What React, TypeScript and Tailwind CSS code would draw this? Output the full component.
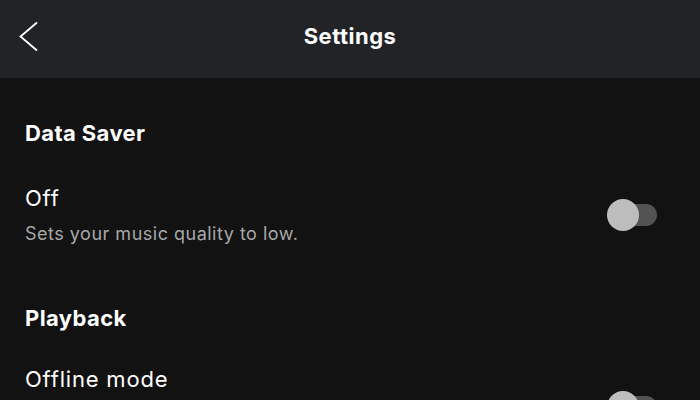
import React from 'react';

function Toggle() {
  return (
    <div className="relative w-[50px] h-[32px] shrink-0">
      <div className="absolute right-0 top-[5px] w-[44px] h-[22px] rounded-full bg-[#535353]" />
      <div className="absolute left-0 top-0 w-[32px] h-[32px] rounded-full bg-[#bdbdbd]" />
    </div>
  );
}

export default function App() {
  return (
    <div className="min-h-screen bg-[#121212] text-white overflow-hidden" style={{ fontFamily: 'Inter, "Noto Sans", sans-serif' }}>
      {/* Header */}
      <div className="relative h-[78px] bg-[#222326] flex items-center justify-center pb-[6px]">
        <svg className="absolute left-[18px] top-[21px]" width="22" height="31" viewBox="0 0 22 31" fill="none">
          <path d="M19 1.5 L2.5 15.5 L19 29.5" stroke="white" strokeWidth="1.8" />
        </svg>
        <h1 className="text-[22px] leading-[28px] font-bold tracking-[0.5px]">Settings</h1>
      </div>

      <div className="pl-[25px] pr-[43px]">
        {/* Data Saver */}
        <h2 className="mt-[41px] text-[22px] leading-[28px] font-bold tracking-[0.4px]">Data Saver</h2>
        <div className="mt-[37px] flex items-center gap-4">
          <div className="flex-1">
            <div className="text-[22px] leading-[28px] tracking-[0.8px]">Off</div>
            <div className="mt-[11px] text-[18px] leading-[22px] tracking-[0.5px] text-[#a7a7a7]">Sets your music quality to low.</div>
          </div>
          <Toggle />
        </div>

        {/* Playback */}
        <h2 className="mt-[59px] text-[22px] leading-[28px] font-bold tracking-[0.4px]">Playback</h2>
        <div className="mt-[33px] flex items-center gap-4">
          <div className="flex-1">
            <div className="text-[22px] leading-[28px] tracking-[0.8px]">Offline mode</div>
            <div className="mt-[11px] text-[18px] leading-[22px] tracking-[0.5px] text-[#a7a7a7] max-w-[520px]">
              When you go offline, you'll only be able to play the music and podcasts you've downloaded.
            </div>
          </div>
          <Toggle />
        </div>
      </div>
    </div>
  );
}
